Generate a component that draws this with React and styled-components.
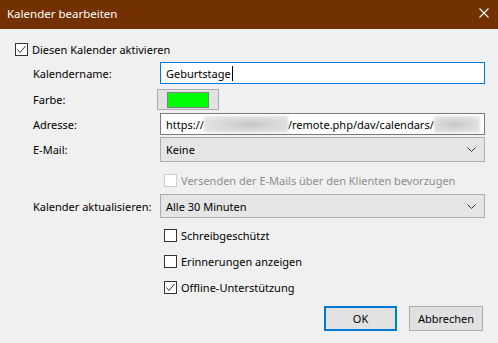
import React from "react";
import styled, { createGlobalStyle } from "styled-components";

const GlobalStyle = createGlobalStyle`
	html, body {
		margin: 0;
		padding: 0;
		background: #f0f0f0;
	}
	body {
		font-family: "Noto Sans", "Open Sans", sans-serif;
		font-size: 11px;
		color: #000;
	}
`;

const Window = styled.div`
	width: 498px;
	height: 343px;
	background: #f0f0f0;
	display: flex;
	flex-direction: column;
`;

const TitleBar = styled.div`
	height: 29px;
	background: #733000;
	color: #fff;
	display: flex;
	align-items: center;
	justify-content: space-between;
	padding: 0 9px 2px 7px;
	box-sizing: border-box;
`;

const Title = styled.span`
	font-size: 11.5px;
`;

const CloseIcon = styled.svg`
	width: 10px;
	height: 10px;
	margin-bottom: 2px;
`;

const Body = styled.div`
	padding: 13px 13px 0 15px;
	display: flex;
	flex-direction: column;
`;

const CheckRow = styled.label`
	display: flex;
	align-items: center;
	gap: 4px;
	height: 14px;
	white-space: nowrap;
	margin-top: ${(p) => p.$top || 0}px;
	margin-left: ${(p) => p.$indent || 0}px;
	color: ${(p) => (p.$disabled ? "#8d8d8d" : "#000")};
`;

const Box = styled.span`
	width: 11px;
	height: 11px;
	border: 1px solid ${(p) => (p.$disabled ? "#cccccc" : "#333333")};
	background: #fff;
	display: flex;
	align-items: center;
	justify-content: center;
	flex-shrink: 0;
`;

const Form = styled.div`
	display: grid;
	grid-template-columns: 127px 325px;
	padding-left: 18px;
	margin-top: 6px;
`;

const Label = styled.div`
	display: flex;
	align-items: center;
	white-space: nowrap;
	height: ${(p) => p.$h}px;
	margin-top: ${(p) => p.$top || 0}px;
`;

const Cell = styled.div`
	height: ${(p) => p.$h}px;
	margin-top: ${(p) => p.$top || 0}px;
	display: flex;
	align-items: center;
`;

const TextInput = styled.div`
	width: 100%;
	height: 100%;
	box-sizing: border-box;
	border: 1px solid ${(p) => (p.$focused ? "#0078d7" : "#7a7a7a")};
	background: #fff;
	display: flex;
	align-items: center;
	padding-left: 5px;
	white-space: nowrap;
	overflow: hidden;
`;

const Caret = styled.span`
	display: inline-block;
	width: 1px;
	height: 15px;
	background: #000;
	margin-left: 1px;
`;

const Blur = styled.span`
	display: inline-block;
	width: ${(p) => p.$w}px;
	height: 17px;
	background: radial-gradient(ellipse at ${(p) => p.$spot || "50%"} 50%, #c4c4c4 0%, #d6d6d6 35%, #e2e2e2 75%, #ececec 100%);
	filter: blur(1px);
`;

const ColorButton = styled.div`
	width: 62px;
	height: 21px;
	box-sizing: border-box;
	border: 1px solid #adadad;
	background: #e1e1e1;
	display: flex;
	align-items: center;
	justify-content: center;
	margin-left: -3px;
`;

const Swatch = styled.span`
	width: 40px;
	height: 14px;
	background: #00ff00;
	border: 1px solid #808080;
`;

const Combo = styled.div`
	width: 100%;
	height: 100%;
	box-sizing: border-box;
	border: 1px solid #adadad;
	background: #e5e5e5;
	display: flex;
	align-items: center;
	justify-content: space-between;
	padding: 0 8px 0 5px;
`;

const Chevron = styled.svg`
	width: 9px;
	height: 5px;
`;

const Empty = styled.div``;

const Buttons = styled.div`
	display: flex;
	justify-content: flex-end;
	gap: 12px;
	margin-top: 12px;
	padding-right: 2px;
`;

const Button = styled.button`
	width: ${(p) => p.$w}px;
	height: 25px;
	box-sizing: border-box;
	font: inherit;
	color: #000;
	background: #e1e1e1;
	border: ${(p) => (p.$default ? "2px solid #0078d7" : "1px solid #adadad")};
	padding: 0;
`;

function Check({ checked, disabled }) {
	return (
		<Box $disabled={disabled}>
			{checked && (
				<svg width="11" height="11" viewBox="0 0 11 11">
					<polyline points="1.5,5.5 4,8.5 9.5,2" fill="none" stroke="#333" strokeWidth="1" />
				</svg>
			)}
		</Box>
	);
}

function ComboBox({ value }) {
	return (
		<Combo>
			<span>{value}</span>
			<Chevron viewBox="0 0 9 5">
				<polyline points="0.5,0.5 4.5,4.5 8.5,0.5" fill="none" stroke="#333" strokeWidth="1" />
			</Chevron>
		</Combo>
	);
}

export default function App() {
	return (
		<>
			<GlobalStyle />
			<Window>
				<TitleBar>
					<Title>Kalender bearbeiten</Title>
					<CloseIcon viewBox="0 0 10 10">
						<path d="M0.5 0.5 L9.5 9.5 M9.5 0.5 L0.5 9.5" stroke="#fff" strokeWidth="1.1" />
					</CloseIcon>
				</TitleBar>
				<Body>
					<CheckRow>
						<Check checked />
						Diesen Kalender aktivieren
					</CheckRow>
					<Form>
						<Label $h={22}>Kalendername:</Label>
						<Cell $h={22}>
							<TextInput $focused>
								Geburtstage
								<Caret />
							</TextInput>
						</Cell>

						<Label $h={21} $top={5}>Farbe:</Label>
						<Cell $h={21} $top={5}>
							<ColorButton>
								<Swatch />
							</ColorButton>
						</Cell>

						<Label $h={22} $top={3}>Adresse:</Label>
						<Cell $h={22} $top={3}>
							<TextInput>
								https://
								<Blur $w={84} $spot="55%" />
								/remote.php/dav/calendars/
								<Blur $w={46} $spot="45%" />
							</TextInput>
						</Cell>

						<Label $h={25} $top={2}>E-Mail:</Label>
						<Cell $h={25} $top={2}>
							<ComboBox value="Keine" />
						</Cell>

						<Empty />
						<Cell $h={14} $top={11}>
							<CheckRow $indent={4} $disabled>
								<Check disabled />
								Versenden der E-Mails über den Klienten bevorzugen
							</CheckRow>
						</Cell>

						<Label $h={24} $top={7}>Kalender aktualisieren:</Label>
						<Cell $h={24} $top={7}>
							<ComboBox value="Alle 30 Minuten" />
						</Cell>

						<Empty />
						<Cell $h={14} $top={10}>
							<CheckRow $indent={4}>
								<Check />
								Schreibgeschützt
							</CheckRow>
						</Cell>

						<Empty />
						<Cell $h={14} $top={12}>
							<CheckRow $indent={4}>
								<Check />
								Erinnerungen anzeigen
							</CheckRow>
						</Cell>

						<Empty />
						<Cell $h={14} $top={12}>
							<CheckRow $indent={4}>
								<Check checked />
								Offline-Unterstützung
							</CheckRow>
						</Cell>
					</Form>
					<Buttons>
						<Button $default $w={73}>OK</Button>
						<Button $w={74}>Abbrechen</Button>
					</Buttons>
				</Body>
			</Window>
		</>
	);
}
